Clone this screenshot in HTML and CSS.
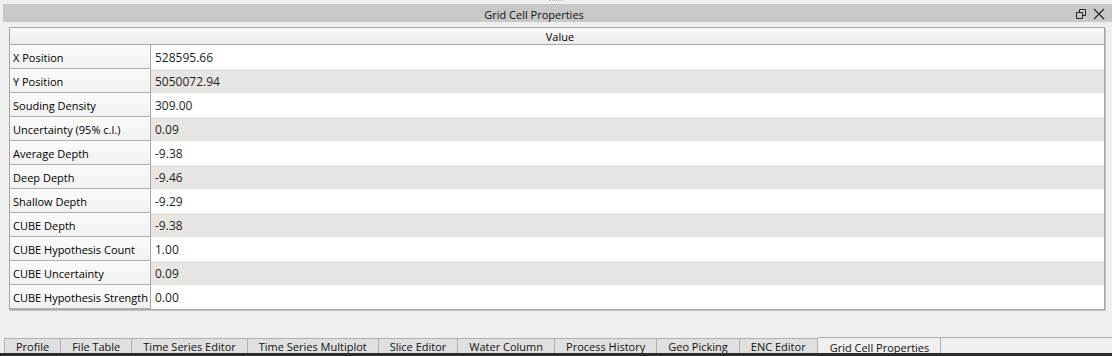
FILE: index.html
```html
<!DOCTYPE html>
<html>
    <head>
        <title>Grid Cell Properties</title>
        <meta name="viewport" content="width=device-width, initial-scale=1">
        <link rel="stylesheet" href="styles.css">
    </head>

    <body>
        <div class="grip"><span></span></div>

        <div class="titlebar">
            <div class="title">Grid Cell Properties</div>
            <div class="buttons">
                <svg width="12" height="12" viewBox="0 0 12 12">
                    <path d="M4.5 1.5h6v6h-2.5 M1.5 4.5h6v6h-6z M4.5 1.5v3" fill="none" stroke="#222" stroke-width="1"/>
                </svg>
                <svg width="12" height="12" viewBox="0 0 12 12">
                    <path d="M1 1L11 11M11 1L1 11" fill="none" stroke="#222" stroke-width="1.1"/>
                </svg>
            </div>
        </div>

        <div class="panel">
            <div class="grid">
                <div class="corner"></div>
                <div class="head">Value</div>

                <div class="label">X Position</div><div class="value">528595.66</div>
                <div class="label">Y Position</div><div class="value alt">5050072.94</div>
                <div class="label">Souding Density</div><div class="value">309.00</div>
                <div class="label">Uncertainty (95% c.l.)</div><div class="value alt">0.09</div>
                <div class="label">Average Depth</div><div class="value">-9.38</div>
                <div class="label">Deep Depth</div><div class="value alt">-9.46</div>
                <div class="label">Shallow Depth</div><div class="value">-9.29</div>
                <div class="label">CUBE Depth</div><div class="value alt">-9.38</div>
                <div class="label">CUBE Hypothesis Count</div><div class="value">1.00</div>
                <div class="label">CUBE Uncertainty</div><div class="value alt">0.09</div>
                <div class="label">CUBE Hypothesis Strength</div><div class="value">0.00</div>
            </div>
        </div>

        <div class="tabs">
            <div class="tab">Profile</div>
            <div class="tab">File Table</div>
            <div class="tab">Time Series Editor</div>
            <div class="tab">Time Series Multiplot</div>
            <div class="tab">Slice Editor</div>
            <div class="tab">Water Column</div>
            <div class="tab">Process History</div>
            <div class="tab">Geo Picking</div>
            <div class="tab">ENC Editor</div>
            <div class="tab active">Grid Cell Properties</div>
            <div class="tab-rest"></div>
        </div>

        <div class="taskbar"></div>
    </body>
</html>
```

FILE: styles.css
```css
html, body {
    margin: 0;
    padding: 0;
    height: 100%;
}

body {
    background: #efefef;
    font-family: "Open Sans", "Noto Sans", sans-serif;
    font-size: 11px;
    color: #000;
    display: flex;
    flex-direction: column;
    overflow: hidden;
}

.grip {
    height: 4px;
    display: flex;
    justify-content: center;
}

.grip span {
    width: 14px;
    height: 1px;
    border-top: 1px dotted #b8b8b8;
}

.titlebar {
    margin-left: 3px;
    height: 18px;
    background: #c8c8c8;
    display: flex;
    align-items: center;
}

.title {
    flex: 1;
    text-align: center;
    padding-top: 2px;
    color: #111;
}

.buttons {
    display: flex;
    gap: 6px;
    padding: 1px 7px 0 10px;
    align-items: center;
}

.panel {
    padding: 5px 7px 0 9px;
}

.grid {
    display: grid;
    grid-template-columns: 141px 1fr;
    border: 1px solid #a6a6a6;
    box-shadow: 1px 1px 0 #c4c4c4;
    background: #fff;
}

.corner, .head {
    height: 16px;
    background: linear-gradient(#fafafa, #ececec);
    border-bottom: 1px solid #a6a6a6;
}

.head {
    text-align: center;
    line-height: 18px;
    padding-right: 135px;
}

.label {
    height: 23px;
    line-height: 25px;
    padding-left: 3px;
    background: linear-gradient(#fbfbfb, #f1f1f1);
    border-right: 1px solid #a6a6a6;
    border-bottom: 1px solid #b0b0b0;
    white-space: nowrap;
    overflow: hidden;
}

.value {
    height: 24px;
    line-height: 25px;
    padding-left: 4px;
    font-size: 12px;
    color: #1e1e1e;
}

.value.alt {
    background: #e8e6e3;
}

.tabs {
    margin-top: 28px;
    height: 15px;
    display: flex;
    align-items: flex-end;
    padding-left: 4px;
}

.tab {
    height: 14px;
    padding: 0 11px;
    background: #e0e0e0;
    border: 1px solid #b0b0b0;
    border-bottom: none;
    border-left: none;
    line-height: 16px;
    color: #111;
    white-space: nowrap;
}

.tab:first-child {
    border-left: 1px solid #b0b0b0;
}

.tab.active {
    height: 15px;
    background: #efefef;
    line-height: 19px;
    padding: 0 11px 0 12px;
}

.tab-rest {
    flex: 1;
    height: 15px;
    border-top: 1px solid #b0b0b0;
}

.taskbar {
    flex: 1;
    background: #2d2d2d;
}
```
